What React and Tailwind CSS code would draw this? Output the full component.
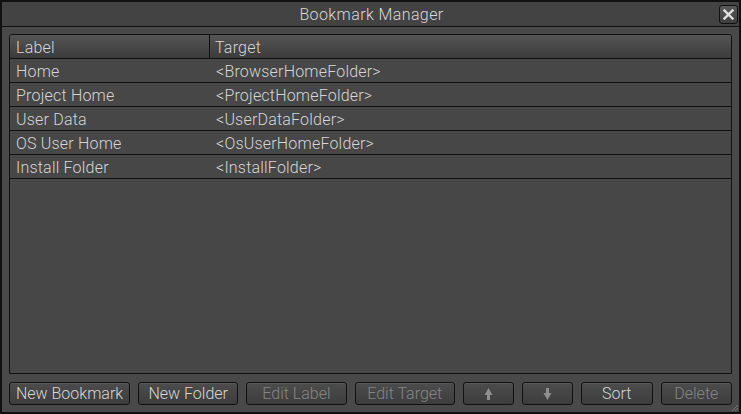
import React from "react";

const rows = [
  ["Home", "<BrowserHomeFolder>"],
  ["Project Home", "<ProjectHomeFolder>"],
  ["User Data", "<UserDataFolder>"],
  ["OS User Home", "<OsUserHomeFolder>"],
  ["Install Folder", "<InstallFolder>"],
];

function Btn({ children, w, disabled }) {
  return (
    <div
      className={`${w} h-[23px] flex items-center justify-center pt-[1px] rounded-[3px] border border-[#111] bg-gradient-to-b from-[#4c4c4c] to-[#3d3d3d] shadow-[inset_0_1px_0_#5a5a5a] text-[16px] leading-none tracking-[0px] font-light ${
        disabled ? "text-[#858585]" : "text-[#d6d6d6]"
      }`}
    >
      {children}
    </div>
  );
}

function Arrow({ down }) {
  return (
    <svg width="9" height="12" viewBox="0 0 9 12" className={down ? "rotate-180" : ""}>
      <path d="M4.5 0 L8.5 7 L6 7 L6 12 L3 12 L3 7 L0.5 7 Z" fill="#8f8f8f" />
    </svg>
  );
}

export default function App() {
  return (
    <div
      className="w-[741px] h-[414px] bg-[#111] p-[2px] flex flex-col"
      style={{ fontFamily: "Roboto, 'Liberation Sans', sans-serif" }}
    >
      <div className="h-[24px] bg-[#434343] flex items-center relative">
        <div className="flex-1 text-center text-[16px] text-[#d8d8d8] leading-none pl-[2px] pt-[1px] tracking-[0.4px] font-light">
          Bookmark Manager
        </div>
        <div className="absolute right-[1px] top-[3px] w-[19px] h-[19px] rounded-[3px] border border-[#111] bg-gradient-to-b from-[#5a5a5a] to-[#3f3f3f] flex items-center justify-center">
          <svg width="11" height="11" viewBox="0 0 11 11">
            <path d="M1.5 1.5 L9.5 9.5 M9.5 1.5 L1.5 9.5" stroke="#e0e0e0" strokeWidth="2.4" strokeLinecap="square" />
          </svg>
        </div>
      </div>
      <div className="h-px bg-[#111]" />
      <div className="flex-1 bg-[#494949] flex flex-col px-[7px] pt-[7px] relative">
        <div className="h-[340px] border border-[#111] rounded-t-[3px] bg-[#474747] flex flex-col overflow-hidden">
          <div className="h-[24px] flex bg-gradient-to-b from-[#555] to-[#3b3b3b] border-b border-[#111] text-[16px] text-[#d6d6d6] leading-none tracking-[0.2px] font-light">
            <div className="w-[200px] border-r border-[#111] flex items-center pl-[6px] pt-[3px]">Label</div>
            <div className="flex-1 flex items-center pl-[5px] pt-[3px]">Target</div>
          </div>
          {rows.map(([a, b]) => (
            <div key={a} className="h-[24px] flex border-b border-[#111] text-[16px] text-[#d6d6d6] leading-none tracking-[0.2px] font-light">
              <div className="w-[200px] flex items-center pl-[6px] pt-[3px]">{a}</div>
              <div className="flex-1 flex items-center pl-[6px] pt-[3px] tracking-[0.2px]">{b}</div>
            </div>
          ))}
        </div>
        <div className="flex gap-[8px] mt-[8px]">
          <Btn w="w-[122px]">New Bookmark</Btn>
          <Btn w="w-[101px]">New Folder</Btn>
          <Btn w="w-[101px]" disabled>Edit Label</Btn>
          <Btn w="w-[101px]" disabled>Edit Target</Btn>
          <Btn w="w-[52px]"><Arrow /></Btn>
          <Btn w="w-[51px]"><Arrow down /></Btn>
          <Btn w="w-[72px]">Sort</Btn>
          <Btn w="w-[72px]" disabled>Delete</Btn>
        </div>
        <svg className="absolute right-0 bottom-0" width="10" height="10" viewBox="0 0 10 10">
          <path d="M9 3 L3 9 M9 6 L6 9" stroke="#777" strokeWidth="1" />
        </svg>
      </div>
    </div>
  );
}
